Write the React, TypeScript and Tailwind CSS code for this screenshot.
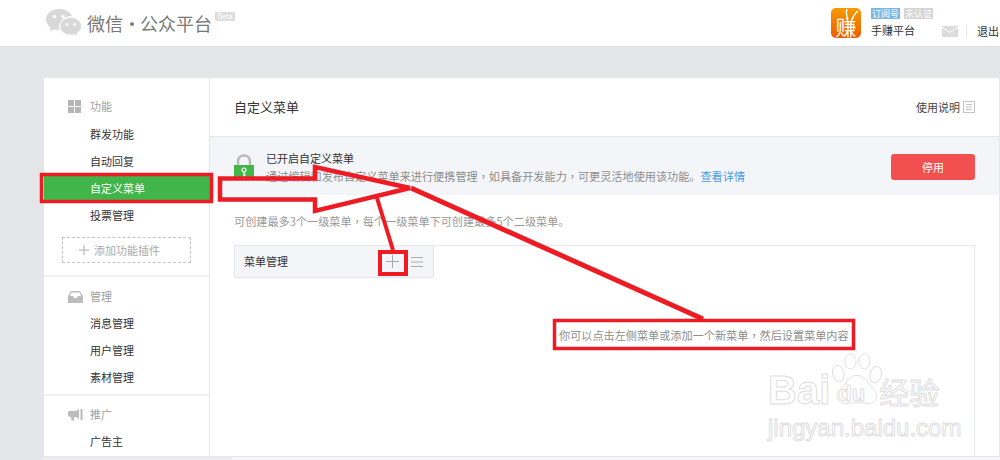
import React from "react";

const font = "[font-family:'Noto_Sans_CJK_SC','Liberation_Sans',sans-serif]";

// the comma sits centred in the cell in the picture, which is how the TC cut draws it
const Comma = () => <span className="[font-family:'Noto_Sans_CJK_TC',sans-serif]">，</span>;

const SectionHead = ({ icon, label }: { icon: React.ReactNode; label: string }) => (
  <div className="flex h-[27px] items-center">
    <span className="flex w-[22px] shrink-0 items-center">{icon}</span>
    <span className="text-[#a0a0a0]">{label}</span>
  </div>
);

const NavItem = ({ label, active }: { label: string; active?: boolean }) => (
  <div
    className={
      active
        ? "-ml-[24px] mb-[2px] mt-[1px] flex h-[24px] w-[166px] items-center bg-[#41b549] pl-[46px] text-white"
        : "flex h-[27px] items-center pl-[22px] text-[#333]"
    }
  >
    {label}
  </div>
);

const WechatLogo = () => (
  <svg width="36" height="30" viewBox="0 0 36 30" fill="#d8d8d8">
    <path d="M13 1C6 1 0 5.600 0 11.500c0 3.300 1.900 6.200 4.800 8.200L3.600 23.500l4.500-2.300c1.500.4 3.100.7 4.900.7h.8c-.4-1.200-.6-2.300-.6-3.500 0-5.700 5.300-10.200 11.900-10.200h1C24.600 3.900 19.200 1 13 1z" />
    <path d="M35.500 18.300c0-4.900-4.900-8.800-10.800-8.800S14 13.400 14 18.300s4.800 8.800 10.700 8.800c1.300 0 2.500-.2 3.600-.5l3.600 2-1-3.200c2.800-1.800 4.600-4.300 4.600-7.100z" stroke="#fff" strokeWidth="0.800" />
    <circle cx="8.500" cy="8.500" r="1.700" fill="#fff" />
    <circle cx="17" cy="8.500" r="1.700" fill="#fff" />
    <circle cx="21" cy="16.500" r="1.400" fill="#fff" />
    <circle cx="28.500" cy="16.500" r="1.400" fill="#fff" />
  </svg>
);

const Annotations = () => (
  <svg className="pointer-events-none absolute left-0 top-0" width="1000" height="460" fill="none" stroke="#ed1c24">
    <rect x="41.500" y="174.500" width="170" height="27" strokeWidth="3.500" />
    <path d="M220 178.500H315V167L410 188L315 211V199.500H220Z" strokeWidth="4.500" />
    <path d="M411 188L703 319" strokeWidth="5" />
    <path d="M377 198L393 250" strokeWidth="4" />
    <rect x="380" y="252" width="26" height="22" strokeWidth="4" />
    <rect x="554.500" y="320.500" width="299" height="28" strokeWidth="3.500" />
  </svg>
);

const Watermark = () => (
  <div className="pointer-events-none absolute left-[768px] top-[368px] h-[70px] w-[190px] [font-family:'Liberation_Sans',sans-serif] text-transparent [-webkit-text-stroke:1px_#dedede]">
    <svg className="absolute left-[60px] top-[-15px]" width="56" height="56" viewBox="0 0 58 60" fill="#fff" stroke="#dedede">
      <ellipse cx="10" cy="22" rx="6" ry="9" transform="rotate(-15 10 22)" />
      <ellipse cx="23" cy="9" rx="6" ry="8" />
      <ellipse cx="38" cy="9" rx="6" ry="8" />
      <ellipse cx="50" cy="23" rx="6" ry="9" transform="rotate(15 50 23)" />
      <path d="M30 24C20 24 19 34 12 39C5 45 10 56 20 54C26 53 34 53 40 54C50 56 55 45 47 38C41 33 40 24 30 24Z" />
    </svg>
    <div className="relative flex h-[44px] items-end">
      <span className="text-[40px] font-bold leading-[44px]">Bai</span>
      <span className="ml-[8px] w-[36px] text-[22px] font-bold leading-[36px]">du</span>
      <span className={`ml-[5px] whitespace-nowrap text-[30px] leading-[42px] ${font}`}>经验</span>
    </div>
    <div className="mt-[2px] whitespace-nowrap text-[24px] leading-[28px]">jingyan.baidu.com</div>
  </div>
);

export default function App() {
  return (
    <div className={`relative h-[460px] w-[1000px] overflow-hidden bg-[#e4e6ea] text-[11px] ${font}`}>
      {/* top bar */}
      <header className="flex h-[47px] items-center border-b border-[#dcdee2] bg-white pl-[46px]">
        <WechatLogo />
        <span className="ml-[5px] flex text-[18px] leading-none text-[#777]">
          微信
          <span className="w-[17px] text-center">·</span>
          公众平台
        </span>
        <span className="mb-[14px] ml-[3px] flex h-[9px] w-[20px] items-center justify-center bg-[#ddd] text-[7px] leading-none text-white">
          Beta
        </span>
        <div className="ml-auto flex items-center">
          <div className="relative flex h-[30px] w-[30px] items-end justify-center rounded-[5px] bg-gradient-to-b from-[#f59a00] to-[#ee5a00] pb-[1px] text-[21px] leading-none text-white">
            赚
            <svg className="absolute left-[14px] top-[1px]" width="14" height="11" viewBox="0 0 14 11" fill="none" stroke="#fff" strokeWidth="1.500">
              <path d="M3 10C1 6 1 3 2 0M7 10C9 6 10 4 13 2" />
            </svg>
          </div>
          <div className="ml-[10px] flex w-[71px] flex-col">
            <div className="flex gap-[4px] text-[9px] leading-[11px] text-white">
              <span className="w-[29px] bg-[#7ab6e6] text-center">订阅号</span>
              <span className="w-[29px] bg-[#d5d5d5] text-center">未认证</span>
            </div>
            <span className="mt-[3px] leading-[17px] text-[#333]">手赚平台</span>
          </div>
          <svg className="mt-[17px]" width="16" height="11" viewBox="0 0 16 11">
            <rect width="16" height="11" fill="#dcdcdc" />
            <path d="M0 1L8 6.500L16 1" fill="none" stroke="#fff" strokeWidth="1" />
          </svg>
          <span className="ml-[8px] mt-[17px] h-[13px] w-px bg-[#e6e6e6]" />
          <span className="ml-[10px] mt-[17px] w-[23px] whitespace-nowrap text-[#333]">退出</span>
        </div>
      </header>

      {/* card */}
      <div className="ml-[43px] mt-[30px] flex h-[380px] w-[957px] border border-[#e7e7eb] bg-white">
        <aside className="w-[166px] shrink-0 border-r border-[#e7e7eb]">
          <div className="pb-[5px] pl-[24px] pt-[15px]">
            <div className="mb-[1px]">
              <SectionHead
                icon={
                  <span className="grid grid-cols-2 gap-[1px]">
                    <i className="h-[6px] w-[6px] bg-[#b5b5b5]" />
                    <i className="h-[6px] w-[6px] bg-[#b5b5b5]" />
                    <i className="h-[6px] w-[6px] bg-[#b5b5b5]" />
                    <i className="h-[6px] w-[6px] bg-[#b5b5b5]" />
                  </span>
                }
                label="功能"
              />
            </div>
            <NavItem label="群发功能" />
            <NavItem label="自动回复" />
            <NavItem label="自定义菜单" active />
            <NavItem label="投票管理" />
            <div className="-ml-[6px] mb-[7px] mt-[8px] flex h-[26px] w-[129px] items-center border border-dashed border-[#c5c5c5] pl-[16px] text-[#aaa]">
              <svg className="mr-[5px]" width="10" height="10" viewBox="0 0 10 10" stroke="#aaa">
                <path d="M5 0V10M0 5H10" />
              </svg>
              添加功能插件
            </div>
          </div>
          <div className="border-t-2 border-[#f1f1f1] pb-[3px] pl-[24px] pt-[6px]">
            <SectionHead
              icon={
                <svg width="15" height="12" viewBox="0 0 15 12" fill="#bcbcbc">
                  <path d="M3 0H12L15 5V12H0V5ZM3.500 1.500L1.800 5H5L6 7H9L10 5H13.200L11.500 1.500Z" />
                </svg>
              }
              label="管理"
            />
            <NavItem label="消息管理" />
            <NavItem label="用户管理" />
            <NavItem label="素材管理" />
          </div>
          <div className="border-t-2 border-[#f1f1f1] pl-[24px] pt-[5px]">
            <SectionHead
              icon={
                <svg width="15" height="12" viewBox="0 0 15 12" fill="#bcbcbc">
                  <path d="M0 3.500C0 2.500 1 2 2 2H8L11 0V10L8 8H6L6 11.500H3.500L3 8C1 8 0 7 0 6Z" />
                  <rect x="12.500" y="0" width="2" height="11" />
                </svg>
              }
              label="推广"
            />
            <NavItem label="广告主" />
          </div>
        </aside>

        <main className="min-w-0 flex-1">
          <div className="flex h-[59px] items-center justify-between border-b border-[#e7e7eb] pl-[24px] pr-[24px]">
            <span className="text-[13px] text-[#333]">自定义菜单</span>
            <span className="flex items-center gap-[3px] text-[#444]">
              使用说明
              <svg width="12" height="12" viewBox="0 0 12 12" fill="none" stroke="#c4c4c4">
                <rect x="0.500" y="0.500" width="11" height="11" />
                <path d="M3 3.500H9M3 6H9M3 8.500H9" />
              </svg>
            </span>
          </div>

          <div className="flex h-[58px] items-center bg-[#f4f5f9] pl-[24px] pr-[24px]">
            <svg width="20" height="26" viewBox="0 0 20 26" className="mt-[1px] shrink-0">
              <path d="M4 12V7.500C4 3.800 6.500 1.500 10 1.500C13.500 1.500 16 3.800 16 7.500V12" fill="none" stroke="#b9b9b9" strokeWidth="2.500" />
              <rect y="11" width="20" height="15" fill="#44b549" />
              <circle cx="10" cy="16" r="2" fill="none" stroke="#fff" strokeWidth="1.200" />
              <path d="M10 18V23M10 21H12" stroke="#fff" strokeWidth="1.200" />
            </svg>
            <div className="ml-[12px] mt-[2px] leading-[18px]">
              <div className="text-[#333]">已开启自定义菜单</div>
              <div className="whitespace-nowrap text-[11.15px] text-[#8d8d8d]">
                通过编辑和发布自定义菜单来进行便携管理
                <Comma />
                如具备开发能力
                <Comma />
                可更灵活地使用该功能。
                <span className="text-[#459ae9]">查看详情</span>
              </div>
            </div>
            <button className="ml-auto mt-[2px] h-[26px] w-[84px] rounded-[3px] bg-[#f25050] text-white">停用</button>
          </div>

          <p className="ml-[24px] mt-[17px] text-[11.15px] leading-[18px] text-[#999]">
            可创建最多3个一级菜单
            <Comma />
            每个一级菜单下可创建最多5个二级菜单。
          </p>

          <div className="ml-[24px] mt-[15px] h-[213px] w-[741px] border-r border-t border-[#e7e7eb]">
            <div className="flex h-full">
              <div className="w-[200px] shrink-0 self-start">
                <div className="flex h-[32px] items-center justify-between border-b border-l border-r border-[#e7e7eb] bg-[#f4f5f9] pl-[9px] pr-[10px] text-[#333]">
                  菜单管理
                  <span className="flex items-center gap-[12px]">
                    <svg width="13" height="13" viewBox="0 0 13 13" stroke="#a8a8a8">
                      <path d="M6.500 0V13M0 6.500H13" />
                    </svg>
                    <svg width="12" height="10" viewBox="0 0 12 10" stroke="#adadad">
                      <path d="M0 .5H12M0 5H12M0 9.500H12" />
                    </svg>
                  </span>
                </div>
              </div>
              <div className="flex-1 pl-[125px] pt-[80px]">
                <span className="whitespace-nowrap text-[11.15px] leading-[18px] text-[#8d8d8d]">
                  你可以点击左侧菜单或添加一个新菜单
                  <Comma />
                  然后设置菜单内容
                </span>
              </div>
            </div>
          </div>
        </main>
      </div>

      {/* strip under the card */}
      <div className="ml-[43px] mt-0 flex h-[3px]">
        <div className="w-[189px] bg-[#ececec]" />
        <div className="flex-1 bg-[#f8f8f8]" />
      </div>

      <Annotations />
      <Watermark />
    </div>
  );
}
